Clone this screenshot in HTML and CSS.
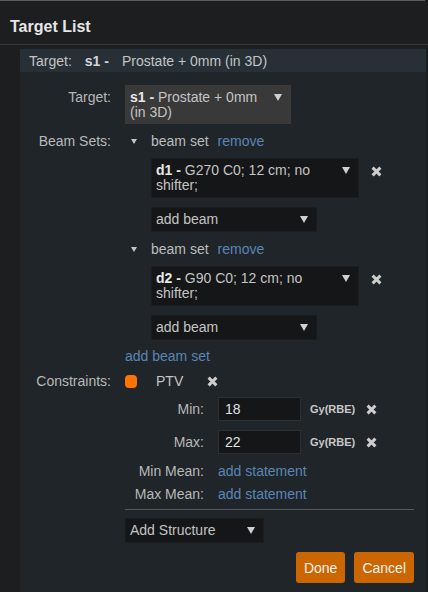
FILE: index.html
```html
<!DOCTYPE html>
<html lang="en">
<head>
<meta charset="utf-8">
<title>Target List</title>
<link rel="stylesheet" href="styles.css">
</head>
<body>
<div class="page">
  <div class="topline"></div>
  <h2 class="title">Target List</h2>
  <div class="divider"></div>

  <section class="panel">
    <div class="panel-head">
      <span>Target:</span>
      <b>s1 -</b>
      <span>Prostate + 0mm (in 3D)</span>
    </div>

    <div class="form">
      <div class="lbl lbl-select">Target:</div>
      <div class="select select-light w-target">
        <div class="select-text"><b>s1 -</b> Prostate + 0mm (in 3D)</div>
        <span class="arrow"></span>
      </div>

      <div class="lbl">Beam Sets:</div>
      <div class="beamsets">
        <div class="beamset">
          <div class="bs-head"><span class="caret"></span><span>beam set</span><a class="link">remove</a></div>
          <div class="bs-body">
            <div class="beam-row">
              <div class="select w-beam">
                <div class="select-text"><b>d1 -</b> G270 C0; 12 cm; no shifter;</div>
                <span class="arrow"></span>
              </div>
              <svg class="xicon" viewBox="0 0 11 11"><path d="M1.6 1.6L9.4 9.4M9.4 1.6L1.6 9.4"/></svg>
            </div>
            <div class="select w-add">
              <div class="select-text">add beam</div>
              <span class="arrow"></span>
            </div>
          </div>
        </div>

        <div class="beamset">
          <div class="bs-head"><span class="caret"></span><span>beam set</span><a class="link">remove</a></div>
          <div class="bs-body">
            <div class="beam-row">
              <div class="select w-beam">
                <div class="select-text"><b>d2 -</b> G90 C0; 12 cm; no shifter;</div>
                <span class="arrow"></span>
              </div>
              <svg class="xicon" viewBox="0 0 11 11"><path d="M1.6 1.6L9.4 9.4M9.4 1.6L1.6 9.4"/></svg>
            </div>
            <div class="select w-add">
              <div class="select-text">add beam</div>
              <span class="arrow"></span>
            </div>
          </div>
        </div>

        <a class="link add-set">add beam set</a>
      </div>

      <div class="lbl">Constraints:</div>
      <div class="constraints">
        <div class="struct">
          <span class="dot"></span>
          <span class="struct-name">PTV</span>
          <svg class="xicon" viewBox="0 0 11 11"><path d="M1.6 1.6L9.4 9.4M9.4 1.6L1.6 9.4"/></svg>
        </div>
        <div class="limits">
          <div class="lim-row">
            <div class="lim-lbl">Min:</div>
            <div class="input">18</div>
            <span class="unit">Gy(RBE)</span>
            <svg class="xicon" viewBox="0 0 11 11"><path d="M1.6 1.6L9.4 9.4M9.4 1.6L1.6 9.4"/></svg>
          </div>
          <div class="lim-row">
            <div class="lim-lbl">Max:</div>
            <div class="input">22</div>
            <span class="unit">Gy(RBE)</span>
            <svg class="xicon" viewBox="0 0 11 11"><path d="M1.6 1.6L9.4 9.4M9.4 1.6L1.6 9.4"/></svg>
          </div>
          <div class="lim-row lim-text">
            <div class="lim-lbl">Min Mean:</div>
            <a class="link stmt">add statement</a>
          </div>
          <div class="lim-row lim-text">
            <div class="lim-lbl">Max Mean:</div>
            <a class="link stmt">add statement</a>
          </div>
        </div>
      </div>

      <div class="footer">
        <hr class="rule">
        <div class="select w-struct">
          <div class="select-text">Add Structure</div>
          <span class="arrow"></span>
        </div>
        <div class="actions">
          <button class="btn">Done</button>
          <button class="btn">Cancel</button>
        </div>
      </div>
    </div>
  </section>
</div>
</body>
</html>
```

FILE: styles.css
```css
html, body {
  margin: 0;
  height: 100%;
}

body {
  background: #1c1e20;
  font-family: "Liberation Sans", Arial, sans-serif;
  font-size: 14px;
  color: #bcbcbc;
  overflow: hidden;
}

.page {
  width: 428px;
}

.topline {
  height: 1px;
  margin-right: 3px;
  background: #5c5c5c;
}

.title {
  margin: 0;
  padding: 15px 10px 0;
  font-size: 16px;
  line-height: 22px;
  font-weight: bold;
  color: #e6e6e6;
}

.divider {
  height: 1px;
  margin-top: 6px;
  background: #36393b;
}

/* target panel */
.panel {
  margin: 4px 2px 0 20px;
  background: #1f2528;
  min-height: 560px;
}

.panel-head {
  display: flex;
  gap: 13px;
  height: 23px;
  align-items: center;
  padding-left: 9px;
  background: #273037;
  color: #c4c4c4;
}

.panel-head b {
  color: #d6d6d6;
}

.form {
  display: grid;
  grid-template-columns: 91px 1fr;
  column-gap: 14px;
  row-gap: 9px;
  align-items: start;
  padding: 13px 12px 0 0;
}

.lbl {
  text-align: right;
  line-height: 16px;
  color: #b8b8b8;
}

.lbl-select {
  padding-top: 4px;
}

b {
  font-weight: bold;
  color: #e8e8e8;
}

.link {
  color: #5a86b6;
  cursor: pointer;
}

/* dropdowns */
.select {
  display: flex;
  align-items: flex-start;
  box-sizing: border-box;
  padding: 4px 8px 4px 4px;
  background: #141618;
  border: 1px solid #1a1d1f;
  line-height: 15px;
  color: #c4c4c4;
}

.select-light {
  background: #393939;
  border-color: #393939;
  padding-bottom: 3px;
}

.select-text {
  flex: 1;
  padding-right: 14px;
}

.arrow {
  flex: none;
  width: 0;
  height: 0;
  margin-top: 4px;
  border-left: 4px solid transparent;
  border-right: 4px solid transparent;
  border-top: 7px solid #cfcfcf;
}

.w-target { width: 166px; }
.w-beam { width: 208px; }
.w-add { width: 166px; }
.w-struct { width: 139px; }

.xicon {
  flex: none;
  width: 11px;
  height: 11px;
  fill: none;
  stroke: #cdcdcd;
  stroke-width: 3;
}

/* beam sets */
.beamsets {
  display: flex;
  flex-direction: column;
  gap: 9px;
}

.beamset {
  display: flex;
  flex-direction: column;
  gap: 9px;
}

.bs-head {
  display: flex;
  align-items: center;
  line-height: 16px;
}

.caret {
  width: 0;
  height: 0;
  margin: 0 14px 0 6px;
  border-left: 3.5px solid transparent;
  border-right: 3.5px solid transparent;
  border-top: 5px solid #c4c4c4;
}

.bs-head .link {
  margin-left: 9px;
}

.bs-body {
  display: flex;
  flex-direction: column;
  gap: 9px;
  padding-left: 26px;
}

.beam-row {
  display: flex;
  align-items: flex-start;
  gap: 12px;
}

.beam-row .xicon {
  margin-top: 8px;
}

.add-set {
  line-height: 16px;
  margin-top: -1px;
}

/* constraints */
.constraints {
  display: flex;
  flex-direction: column;
  gap: 8px;
}

.struct {
  display: flex;
  align-items: center;
  height: 16px;
}

.dot {
  width: 12px;
  height: 13px;
  border-radius: 4px;
  background: #ff7300;
  margin-right: 19px;
}

.struct-name {
  width: 51px;
  color: #c4c4c4;
}

.limits {
  display: flex;
  flex-direction: column;
  gap: 8px;
}

.lim-row {
  display: flex;
  align-items: center;
  height: 24px;
}

.lim-row + .lim-row {
  margin-top: 1px;
}

.lim-text {
  height: 16px;
  line-height: 16px;
}

.lim-text + .lim-text {
  margin-top: -1px;
}

.lim-lbl {
  flex: none;
  width: 79px;
  text-align: right;
  color: #b8b8b8;
}

.input {
  box-sizing: border-box;
  width: 83px;
  height: 24px;
  margin-left: 14px;
  padding: 0 6px;
  line-height: 22px;
  background: #141618;
  border: 1px solid #2b3034;
  color: #e0e0e0;
}

.unit {
  margin: 0 11px 0 9px;
  font-size: 11px;
  font-weight: bold;
  color: #c8c8c8;
}

.stmt {
  margin-left: 14px;
}

/* footer */
.footer {
  grid-column: 2;
  display: flex;
  flex-direction: column;
  align-items: flex-start;
  margin-top: -2px;
}

.rule {
  align-self: stretch;
  margin: 0 0 8px;
  border: 0;
  border-top: 1px solid #55595c;
}

.actions {
  align-self: flex-end;
  display: flex;
  gap: 9px;
  margin-top: 9px;
}

.btn {
  font-family: inherit;
  font-size: 14px;
  height: 31px;
  padding: 0 8px;
  background: #cc6600;
  color: #f4f4f4;
  border: 0;
  border-radius: 3px;
}
```
